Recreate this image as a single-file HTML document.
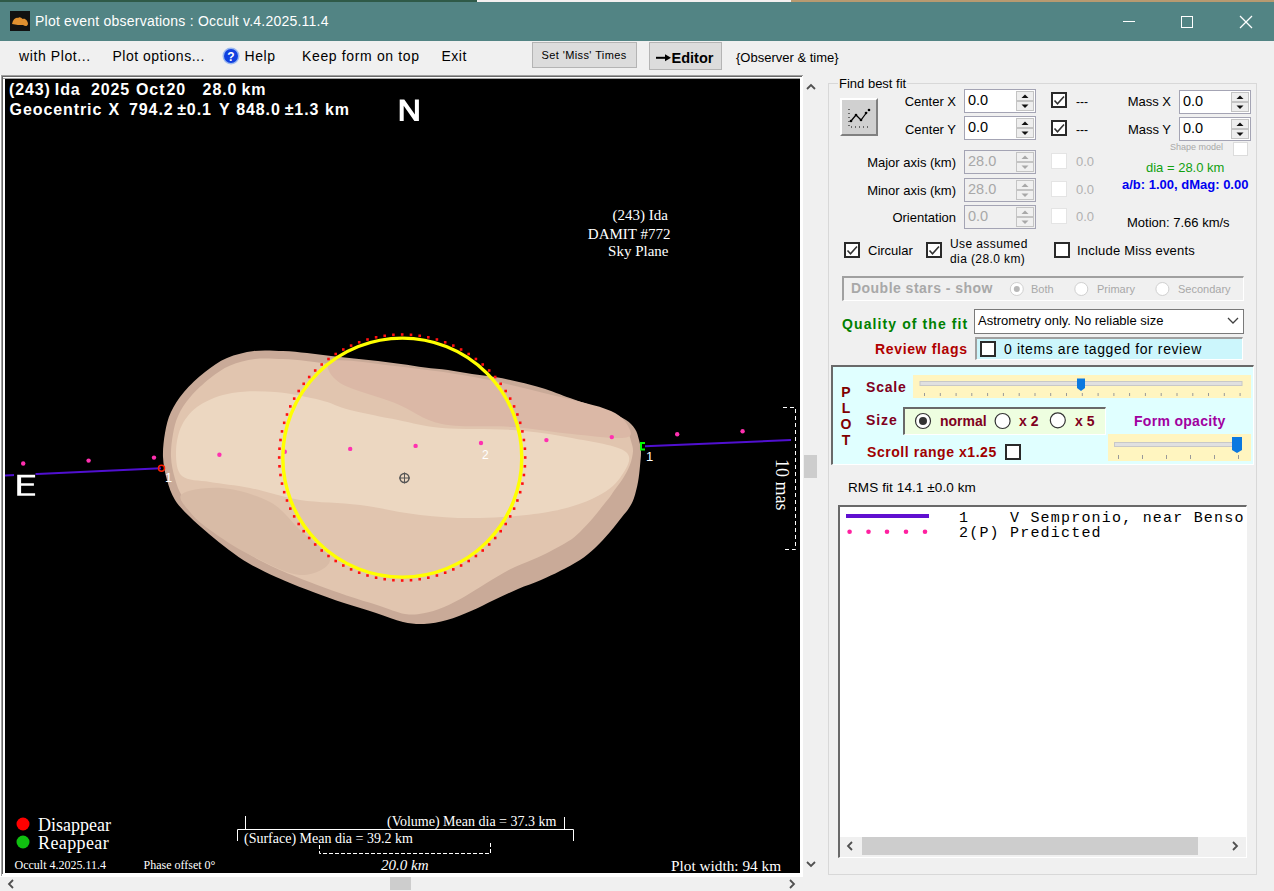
<!DOCTYPE html>
<html><head><meta charset="utf-8">
<style>
*{margin:0;padding:0;box-sizing:border-box}
html,body{width:1274px;height:891px;overflow:hidden;background:#f0f0f0;font-family:"Liberation Sans",sans-serif;color:#000}
.a{position:absolute}
.t{position:absolute;white-space:nowrap;line-height:1}
.cb{width:16px;height:16px;background:#fff;border:2px solid #2a2a2a}
.cb svg{position:absolute;left:-2px;top:-2px}
.cbd{width:16px;height:16px;background:#fff;border:1px solid #e4e4e4}
.nud{width:72px;height:24px;background:#fff;border:1px solid #a4a4b4}
.nud span{position:absolute;left:3px;top:3px;font-size:14.5px;line-height:1}
.nud svg{position:absolute;left:51px;top:1px}
.nud.dis{background:#f0f0f0}
.nud.dis span{color:#a8a8a8}
</style></head><body>
<!-- top desktop strip -->
<div class="a" style="left:0;top:0;width:477px;height:2px;background:#2f5a48"></div>
<div class="a" style="left:477px;top:0;width:314px;height:2px;background:#f4f0f0"></div>
<div class="a" style="left:791px;top:0;width:483px;height:2px;background:#b89a70"></div>
<!-- title bar -->
<div class="a" style="left:0;top:2px;width:1274px;height:39px;background:#528484"></div>
<div class="a" style="left:10px;top:11px;width:20px;height:20px;background:#111"></div>
<svg class="a" style="left:10px;top:11px" width="20" height="20"><path d="M2 13 C3 8 6 6 8 7 C10 5 12 8 13 8 C15 7 18 10 18 13 C17 16 15 15 13 14 C10 14 6 14 2 13Z" fill="#e09030"/></svg>
<div class="t" style="left:35px;top:14px;font-size:14px;letter-spacing:0.22px;color:#fff">Plot event observations : Occult v.4.2025.11.4</div>
<svg class="a" style="left:1110px;top:5px" width="164" height="35">
<line x1="13" y1="16.5" x2="25" y2="16.5" stroke="#fff" stroke-width="1"/>
<rect x="71.5" y="11.5" width="11" height="11" fill="none" stroke="#fff" stroke-width="1"/>
<line x1="130" y1="11" x2="142" y2="23" stroke="#fff" stroke-width="1.2"/>
<line x1="142" y1="11" x2="130" y2="23" stroke="#fff" stroke-width="1.2"/>
</svg>
<!-- menu bar -->
<div class="t" style="left:19px;top:49px;font-size:14px;letter-spacing:0.6px">with Plot...</div>
<div class="t" style="left:112.5px;top:49px;font-size:14px;letter-spacing:0.5px">Plot options...</div>
<svg class="a" style="left:221px;top:46px" width="20" height="20"><circle cx="10" cy="10" r="8.5" fill="#9ab8f0"/><circle cx="10" cy="10" r="7" fill="#1040e0"/><text x="10" y="14.5" font-size="12" font-weight="bold" fill="#fff" text-anchor="middle" font-family="Liberation Sans">?</text></svg>
<div class="t" style="left:244.5px;top:49px;font-size:14px;letter-spacing:0.6px">Help</div>
<div class="t" style="left:302px;top:49px;font-size:14px;letter-spacing:0.64px">Keep form on top</div>
<div class="t" style="left:441.5px;top:49px;font-size:14px;letter-spacing:0.5px">Exit</div>
<div class="a" style="left:532px;top:42px;width:105px;height:26px;background:#dcdcdc;border:1px solid #b4b4b4"></div>
<div class="t" style="left:541.5px;top:50px;font-size:11px;letter-spacing:0.4px">Set 'Miss' Times</div>
<div class="a" style="left:649px;top:42px;width:73px;height:28px;background:#dcdcdc;border:1px solid #b4b4b4"></div>
<svg class="a" style="left:655px;top:53px" width="18" height="10"><path d="M1 4.8 H12" stroke="#000" stroke-width="2"/><path d="M10 1.3 L16 4.8 L10 8.3Z" fill="#000"/></svg><div class="t" style="left:671.5px;top:50.5px;font-size:14.5px;font-weight:bold">Editor</div>
<div class="t" style="left:736px;top:51px;font-size:13px">{Observer &amp; time}</div>

<!-- plot frame -->
<div class="a" style="left:0;top:75px;width:803px;height:802px;background:#fff"></div>
<div class="a" style="left:1px;top:75px;width:802px;height:1px;background:#a0a0a0"></div>
<div class="a" style="left:1px;top:75px;width:1px;height:801px;background:#a0a0a0"></div>
<div class="a" style="left:2px;top:76px;width:800px;height:1px;background:#696969"></div>
<div class="a" style="left:2px;top:76px;width:1px;height:798px;background:#696969"></div>
<div class="a" style="left:3px;top:78px;width:797px;height:1px;background:#a0a0a0"></div>
<div class="a" style="left:5px;top:79px;width:795px;height:794px;background:#000;overflow:hidden" id="plot"><svg class="a" style="left:0;top:0" width="795" height="794" viewBox="5 79 795 794" font-family="Liberation Sans">
<path d="M163.0,457.0 C162.7,449.2 163.7,440.5 165.0,433.0 C166.3,425.5 167.8,418.8 171.0,412.0 C174.2,405.2 178.3,398.7 184.0,392.0 C189.7,385.3 197.8,377.7 205.0,372.0 C212.2,366.3 218.8,361.5 227.0,358.0 C235.2,354.5 244.7,352.2 254.0,351.0 C263.3,349.8 274.2,350.7 283.0,351.0 C291.8,351.3 299.0,352.2 307.0,353.0 C315.0,353.8 323.2,355.1 331.0,356.0 C338.8,356.9 346.2,357.7 354.0,358.5 C361.8,359.3 370.2,360.1 378.0,361.0 C385.8,361.9 393.2,362.9 401.0,364.0 C408.8,365.1 417.2,366.5 425.0,367.5 C432.8,368.5 440.2,368.9 448.0,370.0 C455.8,371.1 464.2,372.8 472.0,374.0 C479.8,375.2 487.2,375.7 495.0,377.0 C502.8,378.3 511.2,380.2 519.0,382.0 C526.8,383.8 533.5,385.3 542.0,388.0 C550.5,390.7 562.0,395.2 570.0,398.0 C578.0,400.8 583.3,402.7 590.0,405.0 C596.7,407.3 604.0,409.5 610.0,412.0 C616.0,414.5 621.8,417.2 626.0,420.0 C630.2,422.8 632.8,425.7 635.0,429.0 C637.2,432.3 638.0,436.3 639.0,440.0 C640.0,443.7 640.8,446.7 641.0,451.0 C641.2,455.3 640.5,460.8 640.0,466.0 C639.5,471.2 639.0,476.7 638.0,482.0 C637.0,487.3 635.5,493.7 634.0,498.0 C632.5,502.3 631.0,504.8 629.0,508.0 C627.0,511.2 625.2,513.0 622.0,517.0 C618.8,521.0 614.5,526.8 610.0,532.0 C605.5,537.2 600.0,543.3 595.0,548.0 C590.0,552.7 585.8,556.2 580.0,560.0 C574.2,563.8 566.5,567.7 560.0,571.0 C553.5,574.3 548.0,577.0 541.0,580.0 C534.0,583.0 525.8,585.7 518.0,589.0 C510.2,592.3 501.8,596.3 494.0,600.0 C486.2,603.7 478.8,607.7 471.0,611.0 C463.2,614.3 454.8,617.8 447.0,620.0 C439.2,622.2 431.3,623.7 424.0,624.0 C416.7,624.3 411.0,623.8 403.0,622.0 C395.0,620.2 385.8,616.2 376.0,613.0 C366.2,609.8 354.5,606.5 344.0,603.0 C333.5,599.5 324.3,596.3 313.0,592.0 C301.7,587.7 286.7,581.8 276.0,577.0 C265.3,572.2 256.8,568.0 249.0,563.5 C241.2,559.0 235.7,554.9 229.0,550.0 C222.3,545.1 215.7,539.7 209.0,534.0 C202.3,528.3 194.7,521.7 189.0,516.0 C183.3,510.3 178.7,506.0 175.0,500.0 C171.3,494.0 169.0,487.2 167.0,480.0 C165.0,472.8 163.3,464.8 163.0,457.0 Z" fill="#c9aa98"/>
<path d="M171.0,456.7 C170.7,449.4 171.7,441.3 172.9,434.4 C174.1,427.5 175.4,421.6 178.3,415.4 C181.1,409.2 184.8,403.4 190.1,397.2 C195.4,391.0 203.3,383.6 210.0,378.3 C216.6,373.0 222.6,368.6 230.2,365.4 C237.7,362.1 246.2,360.0 255.0,358.9 C263.8,357.9 274.2,358.7 282.7,359.0 C291.2,359.3 298.3,360.1 306.2,361.0 C314.1,361.8 322.2,363.0 330.1,363.9 C337.9,364.9 345.3,365.6 353.2,366.5 C361.0,367.3 369.3,368.0 377.1,368.9 C384.9,369.9 392.1,370.8 399.9,371.9 C407.7,373.0 416.2,374.4 424.0,375.4 C431.8,376.4 439.1,376.8 446.9,377.9 C454.7,379.0 463.0,380.8 470.8,381.9 C478.6,383.1 485.9,383.6 493.7,384.9 C501.4,386.2 509.5,388.0 517.2,389.8 C524.8,391.6 531.2,393.0 539.6,395.6 C548.0,398.3 559.4,402.7 567.3,405.5 C575.3,408.4 580.8,410.2 587.4,412.6 C594.0,414.9 601.2,417.0 606.9,419.4 C612.6,421.7 617.9,424.3 621.5,426.6 C625.1,428.9 626.7,430.8 628.3,433.4 C629.9,435.9 630.5,439.1 631.3,442.1 C632.1,445.1 633.2,447.5 633.0,451.3 C632.8,455.1 631.7,460.4 629.9,465.0 C628.2,469.7 625.2,474.8 622.6,479.1 C619.9,483.4 615.9,488.2 613.9,491.0 C611.8,493.9 611.9,494.2 610.4,496.3 C608.9,498.3 607.6,499.8 604.8,503.3 C601.9,506.9 597.5,512.8 593.4,517.6 C589.3,522.3 584.2,527.9 580.0,531.9 C575.7,535.9 572.9,538.4 567.9,541.6 C562.9,544.9 555.9,548.4 550.0,551.4 C544.0,554.5 539.0,556.8 532.3,559.8 C525.6,562.8 517.4,565.7 509.7,569.6 C502.0,573.5 493.7,578.8 486.2,583.3 C478.7,587.8 471.9,592.4 464.8,596.4 C457.7,600.4 450.4,604.4 443.5,607.3 C436.6,610.1 430.0,612.2 423.5,613.3 C417.1,614.4 412.4,615.2 404.9,613.9 C397.4,612.6 388.2,608.5 378.5,605.4 C368.7,602.3 357.0,598.9 346.5,595.4 C336.1,591.9 327.1,588.8 315.9,584.5 C304.6,580.2 289.7,574.4 279.3,569.7 C268.8,565.0 260.6,560.9 253.0,556.6 C245.4,552.2 240.2,548.3 233.7,543.6 C227.3,538.8 220.7,533.4 214.2,527.9 C207.7,522.4 200.0,515.7 194.7,510.3 C189.3,505.0 185.2,501.2 181.8,495.8 C178.5,490.4 176.5,484.4 174.7,477.8 C172.9,471.3 171.3,463.9 171.0,456.7 Z" fill="#e1c5af"/>
<path d="M176.0,452.0 C176.0,443.5 178.0,432.8 182.0,425.0 C186.0,417.2 191.7,410.3 200.0,405.0 C208.3,399.7 219.5,395.2 232.0,393.0 C244.5,390.8 260.3,390.8 275.0,392.0 C289.7,393.2 307.5,397.0 320.0,400.0 C332.5,403.0 337.0,406.7 350.0,410.0 C363.0,413.3 382.7,417.0 398.0,420.0 C413.3,423.0 422.8,426.3 442.0,428.0 C461.2,429.7 491.3,428.3 513.0,430.0 C534.7,431.7 553.2,434.3 572.0,438.0 C590.8,441.7 618.0,445.3 626.0,452.0 C634.0,458.7 625.3,470.3 620.0,478.0 C614.7,485.7 606.0,492.3 594.0,498.0 C582.0,503.7 567.0,508.7 548.0,512.0 C529.0,515.3 501.3,517.5 480.0,518.0 C458.7,518.5 440.0,517.2 420.0,515.0 C400.0,512.8 380.0,507.5 360.0,505.0 C340.0,502.5 318.3,502.8 300.0,500.0 C281.7,497.2 265.0,491.0 250.0,488.0 C235.0,485.0 221.3,484.0 210.0,482.0 C198.7,480.0 187.7,481.0 182.0,476.0 C176.3,471.0 176.0,460.5 176.0,452.0 Z" fill="#ecd7c1"/>
<path d="M332.0,361.0 C341.2,358.2 371.3,363.3 395.0,366.0 C418.7,368.7 447.8,372.2 474.0,377.0 C500.2,381.8 529.2,389.3 552.0,395.0 C574.8,400.7 598.0,405.2 611.0,411.0 C624.0,416.8 628.2,425.5 630.0,430.0 C631.8,434.5 631.7,437.3 622.0,438.0 C612.3,438.7 590.2,435.8 572.0,434.0 C553.8,432.2 534.7,428.7 513.0,427.0 C491.3,425.3 461.7,428.0 442.0,424.0 C422.3,420.0 412.0,409.8 395.0,403.0 C378.0,396.2 350.5,390.0 340.0,383.0 C329.5,376.0 322.8,363.8 332.0,361.0 Z" fill="#dbb8a6"/>
<path d="M182.0,494.0 C187.3,490.0 207.3,486.7 222.0,488.0 C236.7,489.3 257.0,495.0 270.0,502.0 C283.0,509.0 290.0,520.3 300.0,530.0 C310.0,539.7 330.0,552.5 330.0,560.0 C330.0,567.5 313.3,575.8 300.0,575.0 C286.7,574.2 265.0,562.5 250.0,555.0 C235.0,547.5 220.0,537.2 210.0,530.0 C200.0,522.8 194.7,518.0 190.0,512.0 C185.3,506.0 176.7,498.0 182.0,494.0 Z" fill="#d8bba6"/>
<line x1="5" y1="475.5" x2="161" y2="468.3" stroke="#5010d0" stroke-width="2"/>
<rect x="14" y="472" width="21.5" height="26" fill="#000"/>
<line x1="645" y1="446.3" x2="791" y2="440" stroke="#5010d0" stroke-width="2"/>
<circle cx="23.2" cy="463.5" r="2.2" fill="#ff30b0"/>
<circle cx="88.6" cy="460.6" r="2.2" fill="#ff30b0"/>
<circle cx="154.0" cy="457.6" r="2.2" fill="#ff30b0"/>
<circle cx="219.4" cy="454.7" r="2.2" fill="#ff30b0"/>
<circle cx="284.8" cy="451.8" r="2.2" fill="#ff30b0"/>
<circle cx="350.2" cy="448.9" r="2.2" fill="#ff30b0"/>
<circle cx="415.6" cy="445.9" r="2.2" fill="#ff30b0"/>
<circle cx="481.0" cy="443.0" r="2.2" fill="#ff30b0"/>
<circle cx="546.4" cy="440.1" r="2.2" fill="#ff30b0"/>
<circle cx="611.8" cy="437.1" r="2.2" fill="#ff30b0"/>
<circle cx="677.2" cy="434.2" r="2.2" fill="#ff30b0"/>
<circle cx="742.6" cy="431.3" r="2.2" fill="#ff30b0"/>
<rect x="523.9" y="456.2" width="2.6" height="2.6" fill="#ff1010"/>
<rect x="523.6" y="465.0" width="2.6" height="2.6" fill="#ff1010"/>
<rect x="522.6" y="473.7" width="2.6" height="2.6" fill="#ff1010"/>
<rect x="521.1" y="482.3" width="2.6" height="2.6" fill="#ff1010"/>
<rect x="518.9" y="490.9" width="2.6" height="2.6" fill="#ff1010"/>
<rect x="516.1" y="499.2" width="2.6" height="2.6" fill="#ff1010"/>
<rect x="512.8" y="507.3" width="2.6" height="2.6" fill="#ff1010"/>
<rect x="508.9" y="515.1" width="2.6" height="2.6" fill="#ff1010"/>
<rect x="504.4" y="522.7" width="2.6" height="2.6" fill="#ff1010"/>
<rect x="499.4" y="529.9" width="2.6" height="2.6" fill="#ff1010"/>
<rect x="493.9" y="536.7" width="2.6" height="2.6" fill="#ff1010"/>
<rect x="487.9" y="543.2" width="2.6" height="2.6" fill="#ff1010"/>
<rect x="481.4" y="549.2" width="2.6" height="2.6" fill="#ff1010"/>
<rect x="474.6" y="554.7" width="2.6" height="2.6" fill="#ff1010"/>
<rect x="467.4" y="559.7" width="2.6" height="2.6" fill="#ff1010"/>
<rect x="459.8" y="564.2" width="2.6" height="2.6" fill="#ff1010"/>
<rect x="452.0" y="568.1" width="2.6" height="2.6" fill="#ff1010"/>
<rect x="443.9" y="571.4" width="2.6" height="2.6" fill="#ff1010"/>
<rect x="435.6" y="574.2" width="2.6" height="2.6" fill="#ff1010"/>
<rect x="427.0" y="576.4" width="2.6" height="2.6" fill="#ff1010"/>
<rect x="418.4" y="577.9" width="2.6" height="2.6" fill="#ff1010"/>
<rect x="409.7" y="578.9" width="2.6" height="2.6" fill="#ff1010"/>
<rect x="400.9" y="579.2" width="2.6" height="2.6" fill="#ff1010"/>
<rect x="392.1" y="578.9" width="2.6" height="2.6" fill="#ff1010"/>
<rect x="383.4" y="577.9" width="2.6" height="2.6" fill="#ff1010"/>
<rect x="374.8" y="576.4" width="2.6" height="2.6" fill="#ff1010"/>
<rect x="366.2" y="574.2" width="2.6" height="2.6" fill="#ff1010"/>
<rect x="357.9" y="571.4" width="2.6" height="2.6" fill="#ff1010"/>
<rect x="349.8" y="568.1" width="2.6" height="2.6" fill="#ff1010"/>
<rect x="342.0" y="564.2" width="2.6" height="2.6" fill="#ff1010"/>
<rect x="334.4" y="559.7" width="2.6" height="2.6" fill="#ff1010"/>
<rect x="327.2" y="554.7" width="2.6" height="2.6" fill="#ff1010"/>
<rect x="320.4" y="549.2" width="2.6" height="2.6" fill="#ff1010"/>
<rect x="313.9" y="543.2" width="2.6" height="2.6" fill="#ff1010"/>
<rect x="307.9" y="536.7" width="2.6" height="2.6" fill="#ff1010"/>
<rect x="302.4" y="529.9" width="2.6" height="2.6" fill="#ff1010"/>
<rect x="297.4" y="522.7" width="2.6" height="2.6" fill="#ff1010"/>
<rect x="292.9" y="515.1" width="2.6" height="2.6" fill="#ff1010"/>
<rect x="289.0" y="507.3" width="2.6" height="2.6" fill="#ff1010"/>
<rect x="285.7" y="499.2" width="2.6" height="2.6" fill="#ff1010"/>
<rect x="282.9" y="490.9" width="2.6" height="2.6" fill="#ff1010"/>
<rect x="280.7" y="482.3" width="2.6" height="2.6" fill="#ff1010"/>
<rect x="279.2" y="473.7" width="2.6" height="2.6" fill="#ff1010"/>
<rect x="278.2" y="465.0" width="2.6" height="2.6" fill="#ff1010"/>
<rect x="277.9" y="456.2" width="2.6" height="2.6" fill="#ff1010"/>
<rect x="278.2" y="447.4" width="2.6" height="2.6" fill="#ff1010"/>
<rect x="279.2" y="438.7" width="2.6" height="2.6" fill="#ff1010"/>
<rect x="280.7" y="430.1" width="2.6" height="2.6" fill="#ff1010"/>
<rect x="282.9" y="421.5" width="2.6" height="2.6" fill="#ff1010"/>
<rect x="285.7" y="413.2" width="2.6" height="2.6" fill="#ff1010"/>
<rect x="289.0" y="405.1" width="2.6" height="2.6" fill="#ff1010"/>
<rect x="292.9" y="397.3" width="2.6" height="2.6" fill="#ff1010"/>
<rect x="297.4" y="389.7" width="2.6" height="2.6" fill="#ff1010"/>
<rect x="302.4" y="382.5" width="2.6" height="2.6" fill="#ff1010"/>
<rect x="307.9" y="375.7" width="2.6" height="2.6" fill="#ff1010"/>
<rect x="313.9" y="369.2" width="2.6" height="2.6" fill="#ff1010"/>
<rect x="320.4" y="363.2" width="2.6" height="2.6" fill="#ff1010"/>
<rect x="327.2" y="357.7" width="2.6" height="2.6" fill="#ff1010"/>
<rect x="334.4" y="352.7" width="2.6" height="2.6" fill="#ff1010"/>
<rect x="342.0" y="348.2" width="2.6" height="2.6" fill="#ff1010"/>
<rect x="349.8" y="344.3" width="2.6" height="2.6" fill="#ff1010"/>
<rect x="357.9" y="341.0" width="2.6" height="2.6" fill="#ff1010"/>
<rect x="366.2" y="338.2" width="2.6" height="2.6" fill="#ff1010"/>
<rect x="374.8" y="336.0" width="2.6" height="2.6" fill="#ff1010"/>
<rect x="383.4" y="334.5" width="2.6" height="2.6" fill="#ff1010"/>
<rect x="392.1" y="333.5" width="2.6" height="2.6" fill="#ff1010"/>
<rect x="400.9" y="333.2" width="2.6" height="2.6" fill="#ff1010"/>
<rect x="409.7" y="333.5" width="2.6" height="2.6" fill="#ff1010"/>
<rect x="418.4" y="334.5" width="2.6" height="2.6" fill="#ff1010"/>
<rect x="427.0" y="336.0" width="2.6" height="2.6" fill="#ff1010"/>
<rect x="435.6" y="338.2" width="2.6" height="2.6" fill="#ff1010"/>
<rect x="443.9" y="341.0" width="2.6" height="2.6" fill="#ff1010"/>
<rect x="452.0" y="344.3" width="2.6" height="2.6" fill="#ff1010"/>
<rect x="459.8" y="348.2" width="2.6" height="2.6" fill="#ff1010"/>
<rect x="467.4" y="352.7" width="2.6" height="2.6" fill="#ff1010"/>
<rect x="474.6" y="357.7" width="2.6" height="2.6" fill="#ff1010"/>
<rect x="481.4" y="363.2" width="2.6" height="2.6" fill="#ff1010"/>
<rect x="487.9" y="369.2" width="2.6" height="2.6" fill="#ff1010"/>
<rect x="493.9" y="375.7" width="2.6" height="2.6" fill="#ff1010"/>
<rect x="499.4" y="382.5" width="2.6" height="2.6" fill="#ff1010"/>
<rect x="504.4" y="389.7" width="2.6" height="2.6" fill="#ff1010"/>
<rect x="508.9" y="397.3" width="2.6" height="2.6" fill="#ff1010"/>
<rect x="512.8" y="405.1" width="2.6" height="2.6" fill="#ff1010"/>
<rect x="516.1" y="413.2" width="2.6" height="2.6" fill="#ff1010"/>
<rect x="518.9" y="421.5" width="2.6" height="2.6" fill="#ff1010"/>
<rect x="521.1" y="430.1" width="2.6" height="2.6" fill="#ff1010"/>
<rect x="522.6" y="438.7" width="2.6" height="2.6" fill="#ff1010"/>
<rect x="523.6" y="447.4" width="2.6" height="2.6" fill="#ff1010"/>
<circle cx="402.3" cy="457.6" r="119.5" fill="none" stroke="#ffff00" stroke-width="3.4"/>
<circle cx="161.5" cy="468.3" r="3" fill="none" stroke="#ff2000" stroke-width="1.5"/>
<path d="M645 443 L641 443 L641 449.5 L645 449.5" fill="none" stroke="#00ff00" stroke-width="2"/>
<text x="165" y="482" font-size="13" fill="#fff">1</text>
<text x="646" y="461" font-size="13" fill="#fff">1</text>
<text x="482" y="459" font-size="12" fill="#fff">2</text>
<circle cx="404.5" cy="478" r="4.5" fill="none" stroke="#555" stroke-width="1.5"/><line x1="399" y1="478" x2="410" y2="478" stroke="#555"/><line x1="404.5" y1="472.5" x2="404.5" y2="483.5" stroke="#555"/>
<path d="M399.7 99.6 H404.3 L414.9 114.6 V99.6 H418.9 V120.9 H414.4 L403.7 105.8 V120.9 H399.7Z" fill="#fff"/>
<path d="M17.2 474.8 H35.1 V477.4 H21.1 V483.3 H33.9 V485.7 H21.1 V493.2 H35.1 V495.8 H17.2Z" fill="#fff"/>
<g font-size="16" font-weight="bold" fill="#fff" letter-spacing="0.9"><text x="9.0" y="95">(243)</text><text x="54.8" y="95">Ida</text><text x="90.9" y="95">2025</text><text x="136.0" y="95">Oct</text><text x="166.4" y="95">20</text><text x="202.6" y="95">28.0</text><text x="241.4" y="95">km</text><text x="9.6" y="114.7">Geocentric</text><text x="108.5" y="114.7">X</text><text x="129.0" y="114.7">794.2</text><text x="177.2" y="114.7">±0.1</text><text x="219.0" y="114.7">Y</text><text x="236.2" y="114.7">848.0</text><text x="284.7" y="114.7">±1.3</text><text x="325.0" y="114.7">km</text></g>
<g font-family="Liberation Serif" font-size="15" fill="#fff" text-anchor="end"><text x="668" y="220">(243) Ida</text><text x="670.5" y="238.5">DAMIT #772</text><text x="668.5" y="256">Sky Plane</text></g>
<path d="M783 407.5 H795.5 V549.5 H783" fill="none" stroke="#fff" stroke-width="1" stroke-dasharray="4,3"/>
<text transform="translate(776,459) rotate(90)" font-family="Liberation Serif" font-size="18" fill="#fff">10 mas</text>
<circle cx="23" cy="824" r="6.5" fill="#ff0000"/><circle cx="23" cy="842" r="6.5" fill="#10c010"/>
<g font-family="Liberation Serif" font-size="18" fill="#fff"><text x="38" y="830.5">Disappear</text><text x="38" y="848.5" letter-spacing="0.4">Reappear</text></g>
<g font-family="Liberation Serif" font-size="12" fill="#fff"><text x="14.5" y="868.5">Occult 4.2025.11.4</text><text x="143.5" y="868.5">Phase offset 0°</text></g>
<path d="M245.5 816 V829.5 M564.5 817 V829.5 M237.5 841 V829.5 H573.5 V841" fill="none" stroke="#fff" stroke-width="1"/>
<path d="M319.5 845 V853.5 H490.5 V842" fill="none" stroke="#fff" stroke-width="1" stroke-dasharray="4,2"/>
<g font-family="Liberation Serif" font-size="14" fill="#fff"><text x="387" y="826">(Volume) Mean dia = 37.3 km</text><text x="244" y="842.5">(Surface) Mean dia = 39.2 km</text><text x="381" y="869.5" font-style="italic" font-size="15">20.0 km</text><text x="671" y="871" font-size="15.3">Plot width: 94 km</text></g>
</svg></div>

<!-- vertical scrollbar -->
<div class="a" style="left:803px;top:76px;width:17px;height:798px;background:#f0f0f0"></div>
<svg class="a" style="left:803px;top:76px" width="17" height="798">
<path d="M4 13 L8 9 L12 13" fill="none" stroke="#505050" stroke-width="1.8"/>
<rect x="1" y="379" width="13" height="23" fill="#cdcdcd"/>
<path d="M4 786 L8 790 L12 786" fill="none" stroke="#505050" stroke-width="1.8"/>
</svg>
<!-- horizontal scrollbar -->
<div class="a" style="left:0;top:877px;width:803px;height:14px;background:#f0f0f0"></div>
<svg class="a" style="left:0;top:877px" width="803" height="14">
<path d="M13 3 L9 7 L13 11" fill="none" stroke="#505050" stroke-width="1.8"/>
<rect x="390" y="0" width="21" height="13" fill="#cdcdcd"/>
<path d="M790 3 L794 7 L790 11" fill="none" stroke="#505050" stroke-width="1.8"/>
</svg>

<!-- RIGHT PANEL -->
<div id="rp">
<!-- group box -->
<div class="a" style="left:828px;top:83px;width:429px;height:792px;border:1px solid #d8d8d8"></div>
<div class="t" style="left:838px;top:77px;font-size:13px;background:#f0f0f0;padding:0 1px">Find best fit</div>
<!-- fit button -->
<div class="a" style="left:840px;top:98px;width:38px;height:38px;background:#d0d0d0;border:2px solid;border-color:#fff #808080 #808080 #fff"></div>
<svg class="a" style="left:840px;top:98px" width="38" height="38">
<path d="M9 11 V29 H31" fill="none" stroke="#000" stroke-width="1" stroke-dasharray="1,3"/>
<path d="M11 23 L16 17 L21 22 L27 14" fill="none" stroke="#000" stroke-width="1.2"/>
<circle cx="11" cy="23" r="1.3"/><circle cx="16" cy="17" r="1.3"/><circle cx="21" cy="22" r="1.3"/><circle cx="26" cy="15" r="1.3"/><circle cx="29" cy="12" r="1.3"/>
</svg>
<!-- labels -->
<div class="t" style="right:318px;top:95px;font-size:13px">Center X</div>
<div class="t" style="right:318px;top:123px;font-size:13px">Center Y</div>
<div class="t" style="right:318px;top:156px;font-size:13px">Major axis (km)</div>
<div class="t" style="right:318px;top:184px;font-size:13px">Minor axis (km)</div>
<div class="t" style="right:318px;top:211px;font-size:13px">Orientation</div>
<div class="t" style="right:103px;top:95px;font-size:13px">Mass X</div>
<div class="t" style="right:103px;top:123px;font-size:13px">Mass Y</div>
<!-- NUDs -->
<div class="a nud" style="left:964px;top:89px"><span>0.0</span><svg width="18" height="20"><rect x="0.5" y="0.5" width="17" height="9" fill="#eeeeee" stroke="#c4c4c4"/><rect x="0.5" y="10.5" width="17" height="9" fill="#eeeeee" stroke="#c4c4c4"/><path d="M5.5 7 L9 3.5 L12.5 7Z" fill="#111"/><path d="M5.5 13.5 L9 17 L12.5 13.5Z" fill="#111"/></svg></div>
<div class="a nud" style="left:964px;top:116px"><span>0.0</span><svg width="18" height="20"><rect x="0.5" y="0.5" width="17" height="9" fill="#eeeeee" stroke="#c4c4c4"/><rect x="0.5" y="10.5" width="17" height="9" fill="#eeeeee" stroke="#c4c4c4"/><path d="M5.5 7 L9 3.5 L12.5 7Z" fill="#111"/><path d="M5.5 13.5 L9 17 L12.5 13.5Z" fill="#111"/></svg></div>
<div class="a nud dis" style="left:964px;top:150px"><span>28.0</span><svg width="18" height="20"><rect x="0.5" y="0.5" width="17" height="9" fill="#f0f0f0" stroke="#c4c4c4"/><rect x="0.5" y="10.5" width="17" height="9" fill="#f0f0f0" stroke="#c4c4c4"/><path d="M5.5 7 L9 3.5 L12.5 7Z" fill="#a8a8a8"/><path d="M5.5 13.5 L9 17 L12.5 13.5Z" fill="#a8a8a8"/></svg></div>
<div class="a nud dis" style="left:964px;top:178px"><span>28.0</span><svg width="18" height="20"><rect x="0.5" y="0.5" width="17" height="9" fill="#f0f0f0" stroke="#c4c4c4"/><rect x="0.5" y="10.5" width="17" height="9" fill="#f0f0f0" stroke="#c4c4c4"/><path d="M5.5 7 L9 3.5 L12.5 7Z" fill="#a8a8a8"/><path d="M5.5 13.5 L9 17 L12.5 13.5Z" fill="#a8a8a8"/></svg></div>
<div class="a nud dis" style="left:964px;top:205px"><span>0.0</span><svg width="18" height="20"><rect x="0.5" y="0.5" width="17" height="9" fill="#f0f0f0" stroke="#c4c4c4"/><rect x="0.5" y="10.5" width="17" height="9" fill="#f0f0f0" stroke="#c4c4c4"/><path d="M5.5 7 L9 3.5 L12.5 7Z" fill="#a8a8a8"/><path d="M5.5 13.5 L9 17 L12.5 13.5Z" fill="#a8a8a8"/></svg></div>
<div class="a nud" style="left:1179px;top:90px"><span>0.0</span><svg width="18" height="20"><rect x="0.5" y="0.5" width="17" height="9" fill="#eeeeee" stroke="#c4c4c4"/><rect x="0.5" y="10.5" width="17" height="9" fill="#eeeeee" stroke="#c4c4c4"/><path d="M5.5 7 L9 3.5 L12.5 7Z" fill="#111"/><path d="M5.5 13.5 L9 17 L12.5 13.5Z" fill="#111"/></svg></div>
<div class="a nud" style="left:1179px;top:117px"><span>0.0</span><svg width="18" height="20"><rect x="0.5" y="0.5" width="17" height="9" fill="#eeeeee" stroke="#c4c4c4"/><rect x="0.5" y="10.5" width="17" height="9" fill="#eeeeee" stroke="#c4c4c4"/><path d="M5.5 7 L9 3.5 L12.5 7Z" fill="#111"/><path d="M5.5 13.5 L9 17 L12.5 13.5Z" fill="#111"/></svg></div>
<!-- checkboxes col -->
<div class="a cb ck" style="left:1051px;top:92px"><svg width="16" height="16"><path d="M3.5 8.5 L6.5 11.8 L13 4.5" fill="none" stroke="#333" stroke-width="1.6"/></svg></div>
<div class="a cb ck" style="left:1051px;top:120px"><svg width="16" height="16"><path d="M3.5 8.5 L6.5 11.8 L13 4.5" fill="none" stroke="#333" stroke-width="1.6"/></svg></div>
<div class="t" style="left:1076px;top:96px;font-size:12px">---</div>
<div class="t" style="left:1076px;top:124px;font-size:12px">---</div>
<div class="a cbd" style="left:1051px;top:153px"></div>
<div class="a cbd" style="left:1051px;top:181px"></div>
<div class="a cbd" style="left:1051px;top:208px"></div>
<div class="t" style="left:1076px;top:155px;font-size:13px;color:#b0b0b0">0.0</div>
<div class="t" style="left:1076px;top:183px;font-size:13px;color:#b0b0b0">0.0</div>
<div class="t" style="left:1076px;top:210px;font-size:13px;color:#b0b0b0">0.0</div>
<div class="t" style="left:1170px;top:143px;font-size:9px;color:#a8a8a8">Shape model</div>
<div class="a" style="left:1233px;top:142px;width:15px;height:14px;background:#fff;border:1px solid #dcdcdc"></div>
<div class="t" style="left:1146px;top:161px;font-size:13px;color:#10a010">dia = 28.0 km</div>
<div class="t" style="left:1122px;top:178px;font-size:13px;font-weight:bold;color:#0000f0">a/b: 1.00, dMag: 0.00</div>
<div class="t" style="left:1127px;top:216px;font-size:13px">Motion: 7.66 km/s</div>
<!-- bottom checkboxes -->
<div class="a cb ck" style="left:844px;top:242px"><svg width="16" height="16"><path d="M3.5 8.5 L6.5 11.8 L13 4.5" fill="none" stroke="#333" stroke-width="1.6"/></svg></div>
<div class="t" style="left:868px;top:244px;font-size:13px">Circular</div>
<div class="a cb ck" style="left:926px;top:242px"><svg width="16" height="16"><path d="M3.5 8.5 L6.5 11.8 L13 4.5" fill="none" stroke="#333" stroke-width="1.6"/></svg></div>
<div class="t" style="left:950px;top:237px;font-size:12px;letter-spacing:0.4px;line-height:15px">Use assumed<br>dia (28.0 km)</div>
<div class="a cb" style="left:1054px;top:242px"></div>
<div class="t" style="left:1077px;top:244px;font-size:13px;letter-spacing:0.2px">Include Miss events</div>
<!-- double stars -->
<div class="a" style="left:842px;top:276px;width:402px;height:25px;border:1px solid;border-color:#a0a0a0 #fff #fff #a0a0a0;border-width:2px 1px 1px 2px"></div>
<div class="t" style="left:851px;top:281px;font-size:14px;font-weight:bold;letter-spacing:0.47px;color:#a8a8a8">Double stars - show</div>
<svg class="a" style="left:1005px;top:278px" width="240" height="22">
<circle cx="11.8" cy="11" r="6.5" fill="#fff" stroke="#d0d0d0"/><circle cx="11.8" cy="11" r="3" fill="#b8b8b8"/>
<circle cx="76.3" cy="11" r="6.5" fill="#fff" stroke="#d0d0d0"/>
<circle cx="157.4" cy="11" r="6.5" fill="#fff" stroke="#d0d0d0"/>
</svg>
<div class="t" style="left:1031px;top:284px;font-size:11px;color:#a8a8a8">Both</div>
<div class="t" style="left:1097px;top:284px;font-size:11px;color:#a8a8a8">Primary</div>
<div class="t" style="left:1178px;top:284px;font-size:11px;color:#a8a8a8">Secondary</div>
<!-- quality -->
<div class="t" style="left:842px;top:317px;font-size:14px;font-weight:bold;letter-spacing:1.1px;color:#008000">Quality of the fit</div>
<div class="a" style="left:974px;top:309px;width:270px;height:25px;background:#fff;border:1px solid #7a7a7a"></div>
<div class="t" style="left:978px;top:314px;font-size:13px">Astrometry only. No reliable size</div>
<svg class="a" style="left:1226px;top:316px" width="14" height="10"><path d="M2 2 L7 7 L12 2" fill="none" stroke="#404040" stroke-width="1.3"/></svg>
<div class="t" style="left:875px;top:342px;font-size:14px;font-weight:bold;letter-spacing:0.65px;color:#b00000">Review flags</div>
<div class="a" style="left:975px;top:337px;width:268px;height:23px;background:#ccf6fc;border:solid;border-color:#a0a0a0 #fff #fff #a0a0a0;border-width:2px 1px 1px 2px"></div>
<div class="a cb" style="left:980px;top:341px"></div>
<div class="t" style="left:1004px;top:342px;font-size:14px;letter-spacing:0.6px">0 items are tagged for review</div>
<!-- PLOT panel -->
<div class="a" style="left:831px;top:365px;width:423px;height:100px;background:#e0ffff;border:solid;border-color:#696969 #fff #fff #696969;border-width:2px 1px 1px 2px"></div>
<div class="a" style="left:840px;top:384px;width:12px;font-size:14px;font-weight:bold;color:#800000;line-height:16px;text-align:center">P<br>L<br>O<br>T</div>
<div class="t" style="left:866px;top:380px;font-size:14px;font-weight:bold;letter-spacing:0.8px;color:#800020">Scale</div>
<div class="a" style="left:913px;top:375px;width:338px;height:23px;background:#fff5c0"></div>
<svg class="a" style="left:913px;top:375px" width="338" height="23" id="scaletb"><rect x="7" y="6.5" width="322" height="4" fill="#e0e0e0" stroke="#c8c8c8" stroke-width="1"/><line x1="11.5" y1="18" x2="11.5" y2="21" stroke="#999" stroke-width="1"/><line x1="27.3" y1="18" x2="27.3" y2="21" stroke="#999" stroke-width="1"/><line x1="43.1" y1="18" x2="43.1" y2="21" stroke="#999" stroke-width="1"/><line x1="58.8" y1="18" x2="58.8" y2="21" stroke="#999" stroke-width="1"/><line x1="74.6" y1="18" x2="74.6" y2="21" stroke="#999" stroke-width="1"/><line x1="90.4" y1="18" x2="90.4" y2="21" stroke="#999" stroke-width="1"/><line x1="106.2" y1="18" x2="106.2" y2="21" stroke="#999" stroke-width="1"/><line x1="122.0" y1="18" x2="122.0" y2="21" stroke="#999" stroke-width="1"/><line x1="137.7" y1="18" x2="137.7" y2="21" stroke="#999" stroke-width="1"/><line x1="153.5" y1="18" x2="153.5" y2="21" stroke="#999" stroke-width="1"/><line x1="169.3" y1="18" x2="169.3" y2="21" stroke="#999" stroke-width="1"/><line x1="185.1" y1="18" x2="185.1" y2="21" stroke="#999" stroke-width="1"/><line x1="200.9" y1="18" x2="200.9" y2="21" stroke="#999" stroke-width="1"/><line x1="216.6" y1="18" x2="216.6" y2="21" stroke="#999" stroke-width="1"/><line x1="232.4" y1="18" x2="232.4" y2="21" stroke="#999" stroke-width="1"/><line x1="248.2" y1="18" x2="248.2" y2="21" stroke="#999" stroke-width="1"/><line x1="264.0" y1="18" x2="264.0" y2="21" stroke="#999" stroke-width="1"/><line x1="279.8" y1="18" x2="279.8" y2="21" stroke="#999" stroke-width="1"/><line x1="295.5" y1="18" x2="295.5" y2="21" stroke="#999" stroke-width="1"/><line x1="311.3" y1="18" x2="311.3" y2="21" stroke="#999" stroke-width="1"/><line x1="327.1" y1="18" x2="327.1" y2="21" stroke="#999" stroke-width="1"/><path d="M164 3.5 H172 V13 L168 16 L164 13 Z" fill="#0a78e0"/></svg>
<div class="t" style="left:866px;top:413px;font-size:14px;font-weight:bold;letter-spacing:0.9px;color:#800020">Size</div>
<div class="a" style="left:903px;top:407px;width:203px;height:28px;background:#eefee0;border:solid;border-color:#696969 #fff #fff #696969;border-width:2px 1px 1px 2px"></div>
<svg class="a" style="left:903px;top:407px" width="203" height="28">
<circle cx="20" cy="14" r="7.5" fill="#fff" stroke="#333" stroke-width="1.2"/><circle cx="20" cy="14" r="4" fill="#333"/>
<circle cx="99.6" cy="14" r="7.5" fill="#fff" stroke="#333" stroke-width="1.2"/>
<circle cx="154.8" cy="13.3" r="7.5" fill="#fff" stroke="#333" stroke-width="1.2"/>
</svg>
<div class="t" style="left:940px;top:414px;font-size:14px;font-weight:bold;color:#800020">normal</div>
<div class="t" style="left:1019px;top:414px;font-size:14px;font-weight:bold;color:#800020">x 2</div>
<div class="t" style="left:1075px;top:414px;font-size:14px;font-weight:bold;color:#800020">x 5</div>
<div class="t" style="left:1134px;top:414px;font-size:14px;font-weight:bold;letter-spacing:0.3px;color:#a000a0">Form opacity</div>
<div class="a" style="left:1108px;top:434px;width:143px;height:27px;background:#fff5c0"></div>
<svg class="a" style="left:1108px;top:434px" width="143" height="27" id="optb"><rect x="6.5" y="8.5" width="127" height="4" fill="#e0e0e0" stroke="#c8c8c8" stroke-width="1"/><line x1="10.5" y1="21" x2="10.5" y2="25" stroke="#999" stroke-width="1"/><line x1="34.5" y1="21" x2="34.5" y2="25" stroke="#999" stroke-width="1"/><line x1="58.5" y1="21" x2="58.5" y2="25" stroke="#999" stroke-width="1"/><line x1="82.5" y1="21" x2="82.5" y2="25" stroke="#999" stroke-width="1"/><line x1="106.5" y1="21" x2="106.5" y2="25" stroke="#999" stroke-width="1"/><line x1="130.5" y1="21" x2="130.5" y2="25" stroke="#999" stroke-width="1"/><path d="M124 3 H134 V16 L129 19 L124 16 Z" fill="#0a78e0"/></svg>
<div class="t" style="left:867px;top:445px;font-size:14px;font-weight:bold;letter-spacing:0.55px;color:#a00000">Scroll range x1.25</div>
<div class="a cb" style="left:1005px;top:444px"></div>
<!-- RMS -->
<div class="t" style="left:848px;top:481px;font-size:13.5px;letter-spacing:0.1px">RMS fit 14.1 ±0.0 km</div>
<!-- listbox -->
<div class="a" style="left:838px;top:505px;width:409px;height:353px;background:#fff;border:solid;border-color:#696969 #fff #fff #696969;border-width:2px 1px 1px 2px"></div>
<div class="a" style="left:840px;top:837px;width:406px;height:20px;background:#f0f0f0"></div>
<svg class="a" style="left:840px;top:837px" width="406" height="20">
<rect x="22" y="0" width="336" height="18" fill="#cdcdcd"/>
<path d="M12 5 L8 9 L12 13" fill="none" stroke="#505050" stroke-width="1.8"/>
<path d="M393 5 L397 9 L393 13" fill="none" stroke="#505050" stroke-width="1.8"/>
</svg>
<div class="a" style="left:846px;top:514px;width:83px;height:4px;background:#6010d0"></div>
<svg class="a" style="left:840px;top:525px" width="100" height="14">
<circle cx="9.6" cy="6.8" r="2.3" fill="#ff20a0"/><circle cx="28.5" cy="6.8" r="2.3" fill="#ff20a0"/><circle cx="47" cy="6.8" r="2.3" fill="#ff20a0"/><circle cx="66" cy="6.8" r="2.3" fill="#ff20a0"/><circle cx="85" cy="6.8" r="2.3" fill="#ff20a0"/>
</svg>
<div class="a" style="left:840px;top:507px;width:404px;height:40px;overflow:hidden">
<div class="t" style="left:119px;top:4px;font-family:'Liberation Mono',monospace;font-size:15px;letter-spacing:1.2px;white-space:pre">1    V Sempronio, near Benson AZ</div>
<div class="t" style="left:119px;top:19px;font-family:'Liberation Mono',monospace;font-size:15px;letter-spacing:1.2px;white-space:pre">2(P) Predicted</div>
</div>
</div>
</body></html>
